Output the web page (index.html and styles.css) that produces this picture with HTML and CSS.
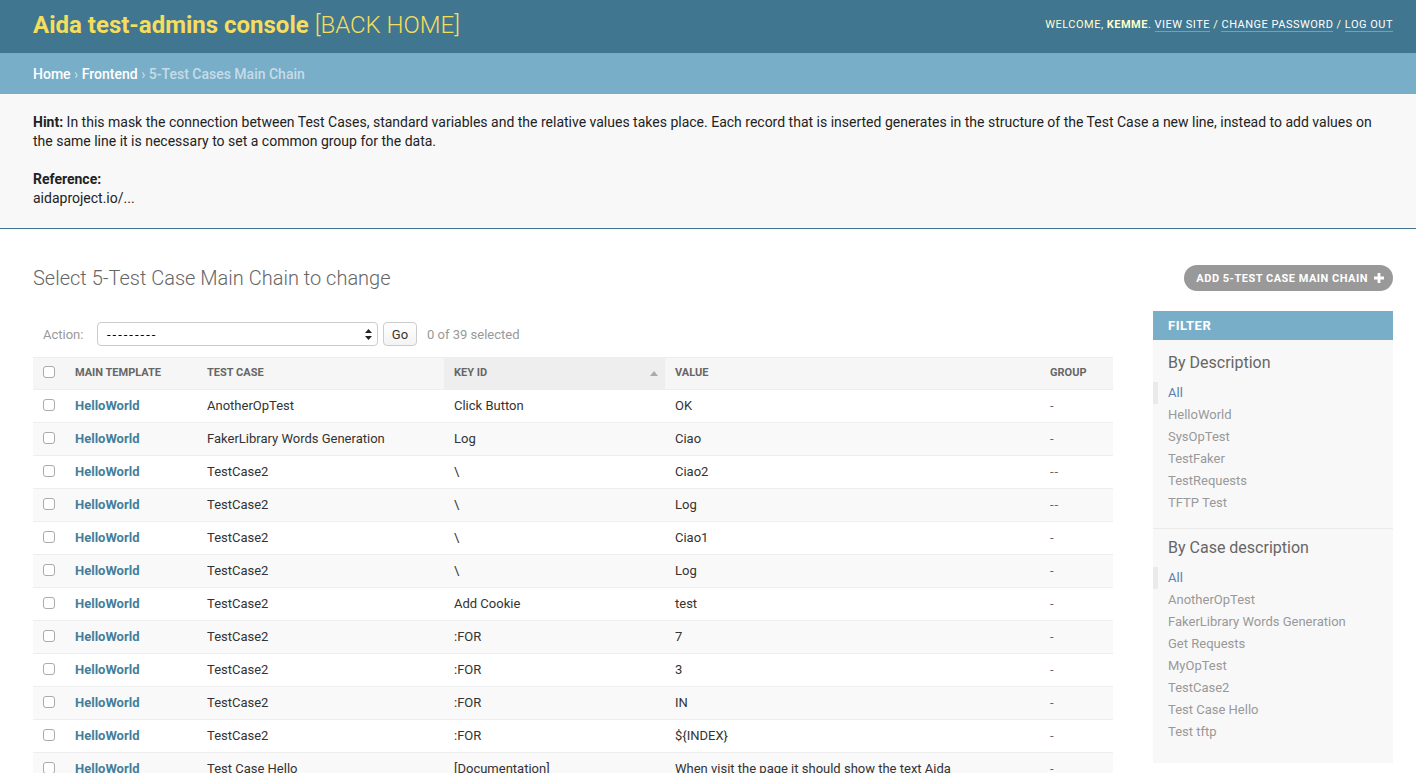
FILE: index.html
```html
<!DOCTYPE html>
<html lang="en">
<head>
<meta charset="utf-8">
<title>Select 5-Test Case Main Chain to change</title>
<link rel="stylesheet" href="styles.css">
</head>
<body>
<header class="header">
  <div class="branding"><strong>Aida test-admins console</strong> <span class="back">[BACK HOME]</span></div>
  <div class="user-tools">WELCOME, <strong>KEMME</strong>. <a href="#">VIEW SITE</a> / <a href="#">CHANGE PASSWORD</a> / <a href="#">LOG OUT</a></div>
</header>
<nav class="breadcrumbs"><a href="#">Home</a> › <a href="#">Frontend</a> › 5-Test Cases Main Chain</nav>
<section class="hint">
  <p><strong>Hint:</strong> In this mask the connection between Test Cases, standard variables and the relative values takes place. Each record that is inserted generates in the structure of the Test Case a new line, instead to add values on the same line it is necessary to set a common group for the data.</p>
  <p><strong>Reference:</strong><br>aidaproject.io/...</p>
</section>
<main class="content">
  <div class="title-row">
    <h1>Select 5-Test Case Main Chain to change</h1>
    <a class="addlink" href="#">ADD 5-TEST CASE MAIN CHAIN
      <svg width="10" height="10" viewBox="0 0 10 10"><path d="M3.6 0h2.8v3.6H10v2.8H6.4V10H3.6V6.4H0V3.6h3.6z" fill="#fff"/></svg>
    </a>
  </div>
  <div class="changelist">
    <div class="results">
      <div class="actions">
        <span class="label">Action:</span>
        <div class="select"><span class="dashes">---------</span>
          <svg width="7" height="11" viewBox="0 0 7 11"><path d="M3.5 0L7 4H0z M3.5 11L0 7h7z" fill="#222"/></svg>
        </div>
        <button class="go">Go</button>
        <span class="counter">0 of 39 selected</span>
      </div>
      <table class="result-list">
        <colgroup><col style="width:32px"><col style="width:132px"><col style="width:247px"><col style="width:221px"><col style="width:375px"><col style="width:73px"></colgroup>
        <thead>
          <tr>
            <th><span class="cb"></span></th>
            <th>Main Template</th>
            <th>Test Case</th>
            <th class="sorted"><div class="sorthead"><span>Key ID</span><span class="arrow"></span></div></th>
            <th>Value</th>
            <th>Group</th>
          </tr>
        </thead>
        <tbody>
          <tr><td><span class="cb"></span></td><td><a href="#">HelloWorld</a></td><td>AnotherOpTest</td><td>Click Button</td><td>OK</td><td class="grp">-</td></tr>
          <tr class="alt"><td><span class="cb"></span></td><td><a href="#">HelloWorld</a></td><td>FakerLibrary Words Generation</td><td>Log</td><td>Ciao</td><td class="grp">-</td></tr>
          <tr><td><span class="cb"></span></td><td><a href="#">HelloWorld</a></td><td>TestCase2</td><td>\</td><td>Ciao2</td><td class="grp">--</td></tr>
          <tr class="alt"><td><span class="cb"></span></td><td><a href="#">HelloWorld</a></td><td>TestCase2</td><td>\</td><td>Log</td><td class="grp">--</td></tr>
          <tr><td><span class="cb"></span></td><td><a href="#">HelloWorld</a></td><td>TestCase2</td><td>\</td><td>Ciao1</td><td class="grp">-</td></tr>
          <tr class="alt"><td><span class="cb"></span></td><td><a href="#">HelloWorld</a></td><td>TestCase2</td><td>\</td><td>Log</td><td class="grp">-</td></tr>
          <tr><td><span class="cb"></span></td><td><a href="#">HelloWorld</a></td><td>TestCase2</td><td>Add Cookie</td><td>test</td><td class="grp">-</td></tr>
          <tr class="alt"><td><span class="cb"></span></td><td><a href="#">HelloWorld</a></td><td>TestCase2</td><td>:FOR</td><td>7</td><td class="grp">-</td></tr>
          <tr><td><span class="cb"></span></td><td><a href="#">HelloWorld</a></td><td>TestCase2</td><td>:FOR</td><td>3</td><td class="grp">-</td></tr>
          <tr class="alt"><td><span class="cb"></span></td><td><a href="#">HelloWorld</a></td><td>TestCase2</td><td>:FOR</td><td>IN</td><td class="grp">-</td></tr>
          <tr><td><span class="cb"></span></td><td><a href="#">HelloWorld</a></td><td>TestCase2</td><td>:FOR</td><td>${INDEX}</td><td class="grp">-</td></tr>
          <tr class="alt"><td><span class="cb"></span></td><td><a href="#">HelloWorld</a></td><td>Test Case Hello</td><td>[Documentation]</td><td>When visit the page it should show the text Aida</td><td class="grp">-</td></tr>
        </tbody>
      </table>
    </div>
    <aside class="filter">
      <h2>Filter</h2>
      <h3>By Description</h3>
      <ul>
        <li class="selected"><a href="#">All</a></li>
        <li><a href="#">HelloWorld</a></li>
        <li><a href="#">SysOpTest</a></li>
        <li><a href="#">TestFaker</a></li>
        <li><a href="#">TestRequests</a></li>
        <li><a href="#">TFTP Test</a></li>
      </ul>
      <hr>
      <h3>By Case description</h3>
      <ul>
        <li class="selected"><a href="#">All</a></li>
        <li><a href="#">AnotherOpTest</a></li>
        <li><a href="#">FakerLibrary Words Generation</a></li>
        <li><a href="#">Get Requests</a></li>
        <li><a href="#">MyOpTest</a></li>
        <li><a href="#">TestCase2</a></li>
        <li><a href="#">Test Case Hello</a></li>
        <li><a href="#">Test tftp</a></li>
      </ul>
    </aside>
  </div>
</main>
</body>
</html>
```
FILE: styles.css
```css
html { overflow: hidden; }
body {
  margin: 0;
  font-family: Roboto, "Liberation Sans", sans-serif;
  font-size: 14px;
  color: #333;
  background: #fff;
}
a { text-decoration: none; }

.header {
  height: 53px;
  box-sizing: border-box;
  padding: 0 23px 3px 33px;
  background: #417690;
  display: flex;
  justify-content: space-between;
  align-items: center;
}
.branding {
  font-size: 24px;
  color: #f5dd5d;
  line-height: 30px;
}
.branding strong { font-weight: 700; }
.branding .back { font-weight: 300; }
.user-tools {
  font-size: 11px;
  letter-spacing: 0.5px;
  color: #ffc;
  line-height: 14px;
}
.user-tools strong { font-weight: 700; }
.user-tools a {
  color: #fff;
  border-bottom: 1px solid rgba(255,255,255,0.3);
}

.breadcrumbs {
  height: 41px;
  box-sizing: border-box;
  padding: 1px 33px 0;
  background: #79aec8;
  color: #c4dce8;
  font-size: 14px;
  font-weight: 500;
  line-height: 40px;
}
.breadcrumbs a { color: #fff; }

.hint {
  background: #f8f8f8;
  padding: 19px 33px 20px;
  border-bottom: 1px solid #417690;
  line-height: 19px;
  font-size: 14px;
  color: #222;
}
.hint p { margin: 0; }
.hint p + p { margin-top: 19px; }
.hint strong { font-weight: 700; }

.content {
  padding: 0 23px 0 33px;
}
.title-row {
  margin-top: 36px;
  height: 26px;
  display: flex;
  justify-content: space-between;
  align-items: center;
}
.title-row h1 {
  margin: 0;
  font-size: 20px;
  font-weight: 300;
  color: #666;
  line-height: 24px;
}
.addlink {
  display: flex;
  align-items: center;
  gap: 6px;
  height: 26px;
  box-sizing: border-box;
  padding: 0 9px 0 12px;
  background: #999;
  color: #fff;
  border-radius: 13px;
  font-size: 11px;
  font-weight: 700;
  letter-spacing: 0.5px;
}

.changelist {
  margin-top: 20px;
  display: flex;
  gap: 40px;
  align-items: flex-start;
}
.results { flex: 1; min-width: 0; }

.actions {
  height: 46px;
  display: flex;
  align-items: center;
  padding: 0 10px;
  font-size: 13px;
}
.actions .label { color: #999; width: 54px; }
.select {
  width: 281px;
  height: 24px;
  box-sizing: border-box;
  border: 1px solid #ccc;
  border-radius: 4px;
  background: #fff;
  display: flex;
  justify-content: space-between;
  align-items: center;
  padding: 0 5px 0 9px;
  font-size: 13px;
  color: #000;
}
.dashes { letter-spacing: 2px; }
.go {
  margin-left: 5px;
  width: 34px;
  height: 24px;
  border: 1px solid #ccc;
  border-radius: 4px;
  background: linear-gradient(#fff, #f3f3f3);
  font-family: inherit;
  font-size: 13px;
  color: #333;
  padding: 0;
}
.counter { margin-left: 10px; color: #999; }

.result-list {
  width: 100%;
  table-layout: fixed;
  border-collapse: collapse;
}
.result-list th {
  text-align: left;
  padding: 7px 10px 8px;
  line-height: 16px;
  font-size: 11px;
  font-weight: 700;
  text-transform: uppercase;
  color: #666;
  background: #f6f6f6;
  border-top: 1px solid #eee;
  border-bottom: 1px solid #eee;
}
.result-list th.sorted { background: #eee; }
.sorthead {
  display: flex;
  justify-content: space-between;
  align-items: center;
}
.arrow {
  width: 0; height: 0;
  border-left: 4px solid transparent;
  border-right: 4px solid transparent;
  border-bottom: 5px solid #aaa;
  margin-right: -3px;
}
.result-list td {
  padding: 8px 10px;
  line-height: 16px;
  font-size: 13px;
  color: #333;
  border-bottom: 1px solid #eee;
  white-space: nowrap;
  overflow: hidden;
}
.result-list tr.alt td { background: #f9f9f9; }
.result-list td a { color: #447e9b; font-weight: 700; }
.result-list td.grp { color: #666; letter-spacing: 1px; }
.cb {
  display: block;
  width: 12px;
  height: 12px;
  box-sizing: border-box;
  border: 1px solid #aaa;
  border-radius: 3px;
  background: #fff;
  margin-top: -2px;
}

.filter {
  width: 240px;
  flex: none;
  background: #f8f8f8;
  padding-bottom: 20px;
}
.filter h2 {
  margin: 0;
  height: 29px;
  line-height: 29px;
  padding: 0 15px;
  background: #79aec8;
  color: #fff;
  font-size: 13px;
  font-weight: 700;
  letter-spacing: 0.5px;
  text-transform: uppercase;
}
.filter h3 {
  margin: 13px 0 0;
  padding: 0 15px;
  font-size: 16px;
  font-weight: 400;
  line-height: 20px;
  color: #666;
}
.filter hr + h3 { margin-top: 9px; }
.filter ul {
  list-style: none;
  margin: 9px 0 0;
  padding: 0;
}
.filter li {
  height: 22px;
  line-height: 22px;
  padding-left: 15px;
  font-size: 13px;
}
.filter li a { color: #999; }
.filter li.selected {
  border-left: 5px solid #eaeaea;
  padding-left: 10px;
}
.filter li.selected a { color: #5b80b2; }
.filter hr {
  margin: 14px 0 0;
  border: 0;
  height: 1px;
  background: #eaeaea;
}
```
